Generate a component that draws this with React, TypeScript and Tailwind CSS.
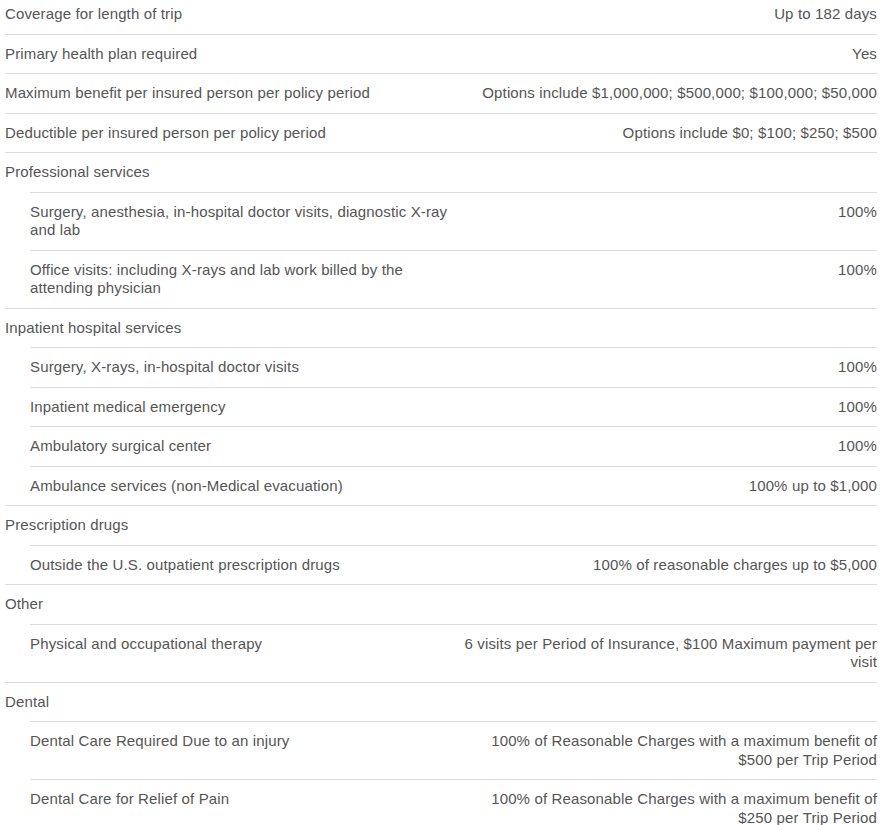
type Row = { label: string; value?: string; children?: { label: string; value: string }[] };

const rows: Row[] = [
  { label: "Coverage for length of trip", value: "Up to 182 days" },
  { label: "Primary health plan required", value: "Yes" },
  { label: "Maximum benefit per insured person per policy period", value: "Options include $1,000,000; $500,000; $100,000; $50,000" },
  { label: "Deductible per insured person per policy period", value: "Options include $0; $100; $250; $500" },
  {
    label: "Professional services",
    children: [
      { label: "Surgery, anesthesia, in-hospital doctor visits, diagnostic X-ray and lab", value: "100%" },
      { label: "Office visits: including X-rays and lab work billed by the attending physician", value: "100%" },
    ],
  },
  {
    label: "Inpatient hospital services",
    children: [
      { label: "Surgery, X-rays, in-hospital doctor visits", value: "100%" },
      { label: "Inpatient medical emergency", value: "100%" },
      { label: "Ambulatory surgical center", value: "100%" },
      { label: "Ambulance services (non-Medical evacuation)", value: "100% up to $1,000" },
    ],
  },
  {
    label: "Prescription drugs",
    children: [{ label: "Outside the U.S. outpatient prescription drugs", value: "100% of reasonable charges up to $5,000" }],
  },
  {
    label: "Other",
    children: [{ label: "Physical and occupational therapy", value: "6 visits per Period of Insurance, $100 Maximum payment per visit" }],
  },
  {
    label: "Dental",
    children: [
      { label: "Dental Care Required Due to an injury", value: "100% of Reasonable Charges with a maximum benefit of $500 per Trip Period" },
      { label: "Dental Care for Relief of Pain", value: "100% of Reasonable Charges with a maximum benefit of $250 per Trip Period" },
    ],
  },
];

function Line({ label, value }: { label: string; value?: string }) {
  return (
    <div className="grid grid-cols-2 py-[10px]">
      <div>{label}</div>
      <div className="text-right">{value}</div>
    </div>
  );
}

export default function App() {
  return (
    <div className="w-[891px] h-[825px] overflow-hidden bg-white">
      <div
        className="-mt-[5px] pl-[5px] pr-[14px] text-[15px] leading-[18.5px] tracking-[0.14px] text-[#555555]"
        style={{ fontFamily: '"Liberation Sans", Arial, sans-serif' }}
      >
        {rows.map((r, i) => (
          <div key={i} className="border-b border-[#dddddd] last:border-b-0">
            <Line label={r.label} value={r.value} />
            {r.children && (
              <div className="pl-[25px]">
                {r.children.map((c, j) => (
                  <div key={j} className="border-t border-[#dddddd]">
                    <Line label={c.label} value={c.value} />
                  </div>
                ))}
              </div>
            )}
          </div>
        ))}
      </div>
    </div>
  );
}
